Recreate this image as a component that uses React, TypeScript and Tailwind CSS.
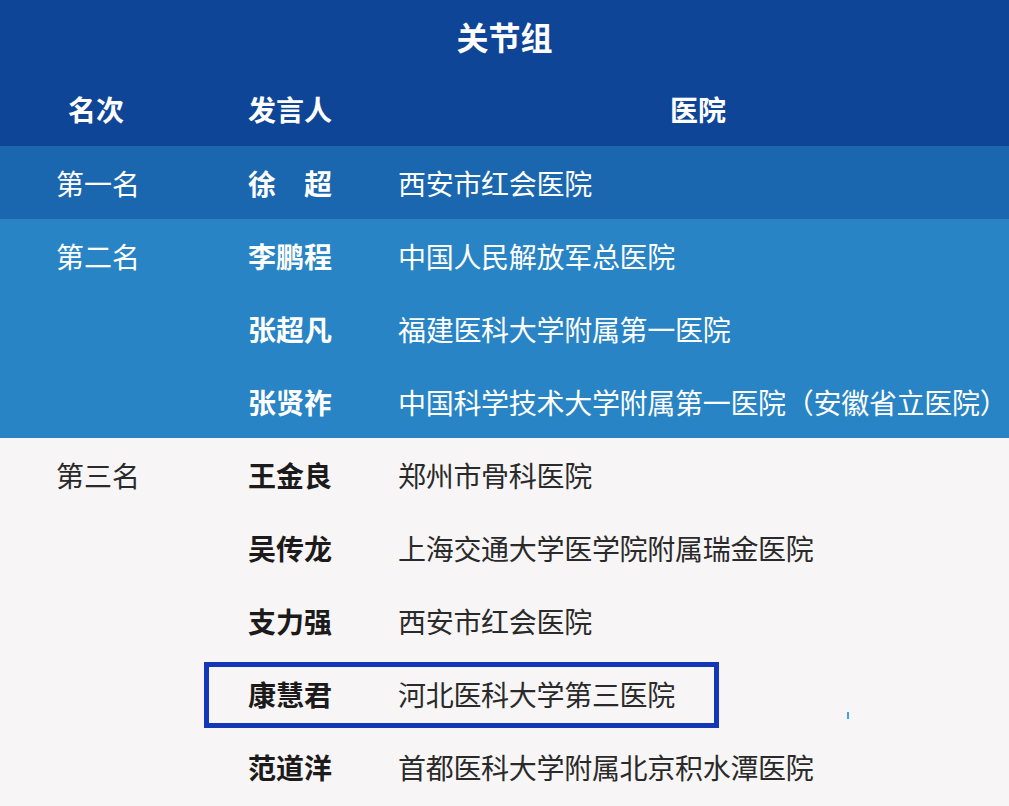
const font = { fontFamily: '"Noto Sans CJK SC", "Noto Sans", sans-serif' };

interface Row {
  rank?: string;
  name: string;
  hospital: string;
  boxed?: boolean;
}

interface Group {
  bg: string;
  text: string;
  nameText: string;
  rows: Row[];
}

const groups: Group[] = [
  {
    bg: "bg-[#1a66af]",
    text: "text-white",
    nameText: "text-white",
    rows: [{ rank: "第一名", name: "徐　超", hospital: "西安市红会医院" }],
  },
  {
    bg: "bg-[#2884c4]",
    text: "text-white",
    nameText: "text-white",
    rows: [
      { rank: "第二名", name: "李鹏程", hospital: "中国人民解放军总医院" },
      { name: "张超凡", hospital: "福建医科大学附属第一医院" },
      { name: "张贤祚", hospital: "中国科学技术大学附属第一医院（安徽省立医院）" },
    ],
  },
  {
    bg: "bg-[#f7f5f5]",
    text: "text-[#2a2a2a]",
    nameText: "text-[#1c1a1a]",
    rows: [
      { rank: "第三名", name: "王金良", hospital: "郑州市骨科医院" },
      { name: "吴传龙", hospital: "上海交通大学医学院附属瑞金医院" },
      { name: "支力强", hospital: "西安市红会医院" },
      { name: "康慧君", hospital: "河北医科大学第三医院", boxed: true },
      { name: "范道洋", hospital: "首都医科大学附属北京积水潭医院" },
    ],
  },
];

export default function App() {
  return (
    <div className="w-[1009px] h-[806px] overflow-hidden bg-[#f7f5f5]" style={font}>
      <div className="bg-[#0f4597] text-white">
        <div className="h-[72px] flex items-center justify-center text-[32px] font-bold leading-none">
          关节组
        </div>
        <div className="h-[74px] flex items-center text-[28px] font-bold leading-none pb-[1px]">
          <div className="pl-[68px] w-[248px] shrink-0">名次</div>
          <div className="w-[422px] shrink-0">发言人</div>
          <div>医院</div>
        </div>
      </div>

      {groups.map((g, gi) => (
        <div key={gi} className={g.bg}>
          {g.rows.map((r, ri) => (
            <div
              key={ri}
              className={`relative h-[73px] flex items-center text-[28px] leading-none whitespace-nowrap overflow-hidden ${g.text}`}
            >
              <div className="pl-[56px] w-[248px] shrink-0">{r.rank ?? ""}</div>
              <div className={`w-[150px] shrink-0 font-bold ${g.nameText}`}>{r.name}</div>
              <div className="shrink-0 tracking-[-0.3px]">{r.hospital}</div>
              {r.boxed && (
                <div className="absolute left-[204px] top-[5px] w-[515px] h-[66px] border-[5px] border-[#1337b6]" />
              )}
              {r.boxed && (
                <div className="absolute left-[847px] top-[55px] w-[2px] h-[7px] bg-[#3aa3ec]" />
              )}
            </div>
          ))}
        </div>
      ))}
    </div>
  );
}
